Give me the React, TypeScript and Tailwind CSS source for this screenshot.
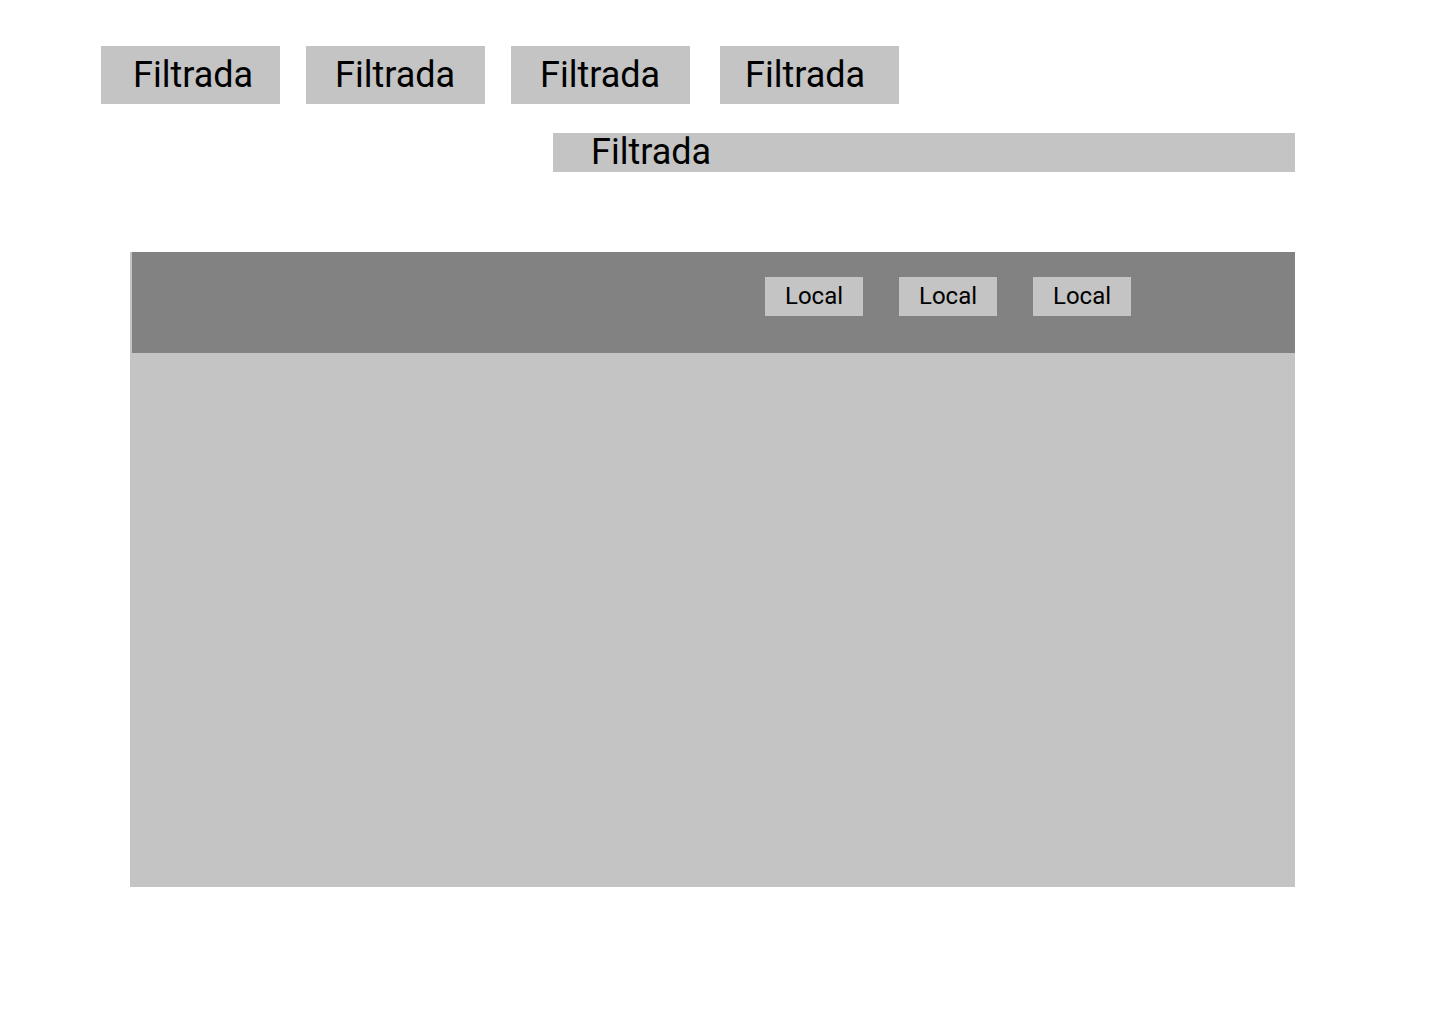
const FILTERS = [
  { label: "Filtrada", pad: "pl-[32px]", gap: "" },
  { label: "Filtrada", pad: "pl-[29px]", gap: "ml-[26px]" },
  { label: "Filtrada", pad: "pl-[29px]", gap: "ml-[26px]" },
  { label: "Filtrada", pad: "pl-[25px]", gap: "ml-[30px]" },
];
const LOCALS = ["Local", "Local", "Local"];

export default function App() {
  return (
    <div className="w-[1440px] h-[1024px] bg-white text-black font-['Roboto',sans-serif]">
      {/* Filter buttons */}
      <div className="flex pl-[101px] pt-[46px]">
        {FILTERS.map((f, i) => (
          <div
            key={i}
            className={`${f.gap} ${f.pad} w-[179px] h-[58px] bg-[#c4c4c4] flex items-center text-[36px] leading-none pb-[1px]`}
          >
            {f.label}
          </div>
        ))}
      </div>

      {/* Wide filter bar */}
      <div className="flex pl-[553px] mt-[29px]">
        <div className="w-[742px] h-[39px] bg-[#c4c4c4] flex items-center pl-[38px] pb-[1px] text-[36px] leading-none">
          Filtrada
        </div>
      </div>

      {/* Main panel */}
      <div className="ml-[130px] mt-[80px] w-[1165px] h-[635px] bg-[#c4c4c4] flex flex-col">
        <div className="ml-[2px] h-[101px] bg-[#828282] flex items-start pt-[25px] pl-[633px] gap-[36px]">
          {LOCALS.map((l, i) => (
            <div
              key={i}
              className="w-[98px] h-[39px] bg-[#c4c4c4] flex items-center justify-center pb-[2px] text-[24px] leading-none"
            >
              {l}
            </div>
          ))}
        </div>
      </div>
    </div>
  );
}
